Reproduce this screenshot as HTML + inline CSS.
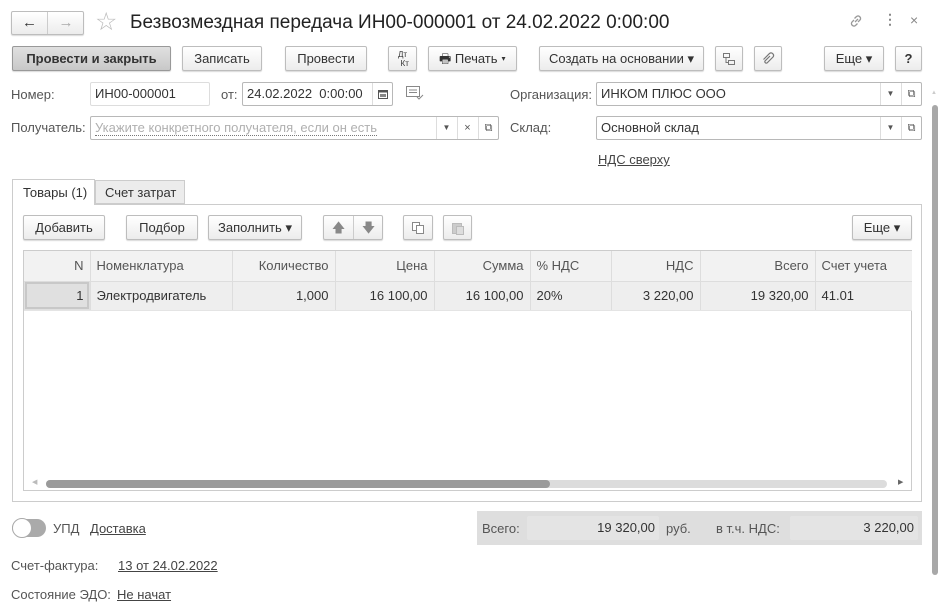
<!DOCTYPE html>
<html><head><meta charset="utf-8"><style>
*{box-sizing:border-box;margin:0;padding:0}
body{width:938px;height:604px;overflow:hidden;background:#fff;font-family:"Liberation Sans",sans-serif;font-size:13px;color:#404040;position:relative}
.a{position:absolute}
.btn{position:absolute;height:25px;border:1px solid #bdbdbd;border-radius:2px;background:linear-gradient(#fff,#ececec);box-shadow:0 1px 1px rgba(0,0,0,.15);text-align:center;line-height:23px;color:#333;font-size:13px;white-space:nowrap}
.fld{position:absolute;height:24px;border:1px solid #b8b8b8;border-radius:2px;background:#fff;line-height:22px;padding-left:4px;color:#333;white-space:nowrap;overflow:hidden}
.lbl{position:absolute;color:#555;white-space:nowrap}
.dd{position:absolute;top:0;width:20px;height:22px;border-left:1px solid #ddd;text-align:center;font-size:8px;color:#555;line-height:22px}
.u{text-decoration:underline;color:#444}
table{border-collapse:collapse;position:absolute;left:24px;top:251px;width:888px}
td{height:29px;border-right:1px solid #ddd;padding:0 6px;white-space:nowrap;color:#333}
tr.h td{background:#f2f2f2;color:#555;height:30px;border-bottom:1px solid #ddd}
tr.r td{background:#eee;border-bottom:1px solid #e4e4e4}
.r1{text-align:right}
svg{display:block}
</style></head><body>
<div class="btn" style="left:11px;top:11px;width:73px;height:24px;line-height:22px"><span style="position:absolute;left:0;width:36px;border-right:1px solid #ccc;height:22px;font-size:15px;color:#333">&#8592;</span><span style="position:absolute;left:36px;width:36px;font-size:15px;color:#aaa">&#8594;</span></div>
<div class="a" style="left:95px;top:7px;font-size:25px;color:#bbb">&#9734;</div>
<div class="a" style="left:130px;top:12px;font-size:19px;color:#222">Безвозмездная передача ИН00-000001 от 24.02.2022 0:00:00</div>
<svg class="a" style="left:848px;top:13px" width="16" height="16" viewBox="0 0 16 16" fill="none" stroke="#999" stroke-width="1.3"><path d="M7 9l3-3M6 7L4 9a2.5 2.5 0 003.5 3.5L9.5 10.5M10 9l2-2A2.5 2.5 0 008.5 3.5L6.5 5.5"/></svg>
<div class="a" style="left:883px;top:11px;font-size:14px;color:#888;font-weight:bold">&#8942;</div>
<div class="a" style="left:910px;top:12px;font-size:14px;color:#888">×</div>
<div class="btn" style="left:12px;top:46px;width:159px;background:linear-gradient(#e0e0e0,#c8c8c8);font-weight:bold;border-color:#999">Провести и закрыть</div>
<div class="btn" style="left:182px;top:46px;width:80px">Записать</div>
<div class="btn" style="left:285px;top:46px;width:82px">Провести</div>
<div class="btn" style="left:388px;top:46px;width:29px;font-size:8px;line-height:9px;padding-top:3px">Дт<br>&nbsp;&nbsp;Кт</div>
<div class="btn" style="left:428px;top:46px;width:89px">&#128438; Печать ▾</div>
<div class="btn" style="left:539px;top:46px;width:165px">Создать на основании ▾</div>
<div class="btn" style="left:715px;top:46px;width:28px"><svg style="margin:5px auto" width="14" height="14" viewBox="0 0 14 14" fill="none" stroke="#777"><rect x="1.5" y="1.5" width="6" height="4"/><rect x="6.5" y="8.5" width="6" height="4"/><path d="M4 5.5v5h2.5"/></svg></div>
<div class="btn" style="left:754px;top:46px;width:28px"><svg style="margin:5px auto" width="14" height="14" viewBox="0 0 14 14" fill="none" stroke="#777" stroke-width="1.2"><path d="M9 4l-5 5a1.5 1.5 0 002 2l6-6a2.5 2.5 0 00-3.5-3.5L2.5 7.5"/></svg></div>
<div class="btn" style="left:824px;top:46px;width:60px">Еще ▾</div>
<div class="btn" style="left:895px;top:46px;width:27px;font-weight:bold">?</div>
<div class="lbl" style="left:11px;top:87px">Номер:</div>
<div class="fld" style="left:90px;top:82px;width:120px;border-color:#ddd">ИН00-000001</div>
<div class="lbl" style="left:221px;top:87px">от:</div>
<div class="fld" style="left:242px;top:82px;width:151px">24.02.2022&nbsp; 0:00:00<span class="dd" style="right:0"><svg style="margin:6px auto" width="10" height="10" viewBox="0 0 10 10"><rect x="0.5" y="1.5" width="9" height="8" fill="none" stroke="#555"/><rect x="0.5" y="1.5" width="9" height="2" fill="#555"/><rect x="2" y="5" width="6" height="3" fill="#888"/></svg></span></div>
<svg class="a" style="left:406px;top:86px" width="18" height="14" viewBox="0 0 18 14" fill="none" stroke="#888"><rect x="0.5" y="0.5" width="13" height="10"/><path d="M3 4h8M3 6.5h8M11 11l2 2 4-4"/></svg>
<div class="lbl" style="left:510px;top:87px">Организация:</div>
<div class="fld" style="left:596px;top:82px;width:326px">ИНКОМ ПЛЮС ООО<span class="dd" style="right:21px">▼</span><span class="dd" style="right:0;font-size:11px">&#10697;</span></div>
<div class="lbl" style="left:11px;top:120px">Получатель:</div>
<div class="fld" style="left:90px;top:116px;width:409px;color:#b0b0b0"><span style="border-bottom:1px dotted #777">Укажите конкретного получателя, если он есть</span><span class="dd" style="right:42px">▼</span><span class="dd" style="right:21px;font-size:11px">×</span><span class="dd" style="right:0;font-size:11px;color:#555">&#10697;</span></div>
<div class="lbl" style="left:510px;top:120px">Склад:</div>
<div class="fld" style="left:596px;top:116px;width:326px">Основной склад<span class="dd" style="right:21px">▼</span><span class="dd" style="right:0;font-size:11px">&#10697;</span></div>
<div class="a u" style="left:598px;top:152px">НДС сверху</div>
<div class="a" style="left:12px;top:204px;width:910px;height:298px;border:1px solid #ccc"></div>
<div class="a" style="left:12px;top:179px;width:83px;height:26px;border:1px solid #ccc;border-bottom:none;background:#fff;padding:5px 0 0 10px;color:#333">Товары (1)</div>
<div class="a" style="left:95px;top:180px;width:90px;height:24px;border:1px solid #ccc;background:#ececec;padding:4px 0 0 9px;color:#333">Счет затрат</div>
<div class="btn" style="left:23px;top:215px;width:82px">Добавить</div>
<div class="btn" style="left:126px;top:215px;width:72px">Подбор</div>
<div class="btn" style="left:208px;top:215px;width:94px">Заполнить ▾</div>
<div class="btn" style="left:323px;top:215px;width:60px;color:#888"><span style="position:absolute;left:0;width:30px;border-right:1px solid #ccc">&#129093;</span><span style="position:absolute;left:30px;width:29px">&#129095;</span></div>
<div class="btn" style="left:403px;top:215px;width:30px"><svg style="margin:5px auto" width="14" height="14" viewBox="0 0 14 14" fill="#fff" stroke="#888"><rect x="1.5" y="1.5" width="7" height="8"/><rect x="5.5" y="4.5" width="7" height="8"/></svg></div>
<div class="btn" style="left:443px;top:215px;width:29px"><svg style="margin:5px auto" width="14" height="14" viewBox="0 0 14 14" fill="#ccc" stroke="#bbb"><rect x="1.5" y="2.5" width="9" height="10"/><rect x="5.5" y="5.5" width="7" height="8" fill="#ddd"/></svg></div>
<div class="btn" style="left:852px;top:215px;width:60px">Еще ▾</div>
<div class="a" style="left:23px;top:250px;width:889px;height:241px;border:1px solid #ccc"></div>
<table>
<tr class="h"><td class="r1" style="width:66px">N</td><td style="width:142px">Номенклатура</td><td class="r1" style="width:103px">Количество</td><td class="r1" style="width:99px">Цена</td><td class="r1" style="width:96px">Сумма</td><td style="width:81px">% НДС</td><td class="r1" style="width:89px">НДС</td><td class="r1" style="width:115px">Всего</td><td style="border-right:none">Счет учета</td></tr>
<tr class="r"><td class="r1" style="background:#e0e0e0;outline:2px solid #c8c8c8;outline-offset:-3px">1</td><td>Электродвигатель</td><td class="r1">1,000</td><td class="r1">16 100,00</td><td class="r1">16 100,00</td><td>20%</td><td class="r1">3 220,00</td><td class="r1">19 320,00</td><td style="border-right:none">41.01</td></tr>
</table>
<div class="a" style="left:46px;top:480px;width:841px;height:8px;border-radius:4px;background:#dcdcdc"></div>
<div class="a" style="left:46px;top:480px;width:504px;height:8px;border-radius:4px;background:#9a9a9a"></div>
<div class="a" style="left:32px;top:478px;font-size:7px;color:#bbb">◀</div>
<div class="a" style="left:898px;top:478px;font-size:7px;color:#666">▶</div>
<div class="a" style="left:932px;top:105px;width:6px;height:470px;background:#a8a8a8;border-radius:3px"></div>
<div class="a" style="left:931px;top:90px;font-size:6px;color:#ccc">▲</div>
<div class="a" style="left:12px;top:519px;width:34px;height:18px;border-radius:9px;background:#aaa"></div>
<div class="a" style="left:12px;top:518px;width:20px;height:20px;border-radius:10px;background:#fff;border:1px solid #aaa"></div>
<div class="lbl" style="left:53px;top:521px">УПД</div>
<div class="a u" style="left:90px;top:521px">Доставка</div>
<div class="a" style="left:477px;top:511px;width:445px;height:34px;background:#dedede"></div>
<div class="lbl" style="left:482px;top:521px">Всего:</div>
<div class="a" style="left:527px;top:516px;width:132px;height:24px;background:#e4e4e4;border-radius:2px;text-align:right;padding-right:4px;line-height:24px;color:#333">19 320,00</div>
<div class="lbl" style="left:666px;top:521px">руб.</div>
<div class="lbl" style="left:716px;top:521px">в т.ч. НДС:</div>
<div class="a" style="left:790px;top:516px;width:128px;height:24px;background:#e4e4e4;border-radius:2px;text-align:right;padding-right:4px;line-height:24px;color:#333">3 220,00</div>
<div class="lbl" style="left:11px;top:558px">Счет-фактура:</div>
<div class="a u" style="left:118px;top:558px">13 от 24.02.2022</div>
<div class="lbl" style="left:11px;top:587px">Состояние ЭДО:</div>
<div class="a u" style="left:117px;top:587px">Не начат</div>
</body></html>
